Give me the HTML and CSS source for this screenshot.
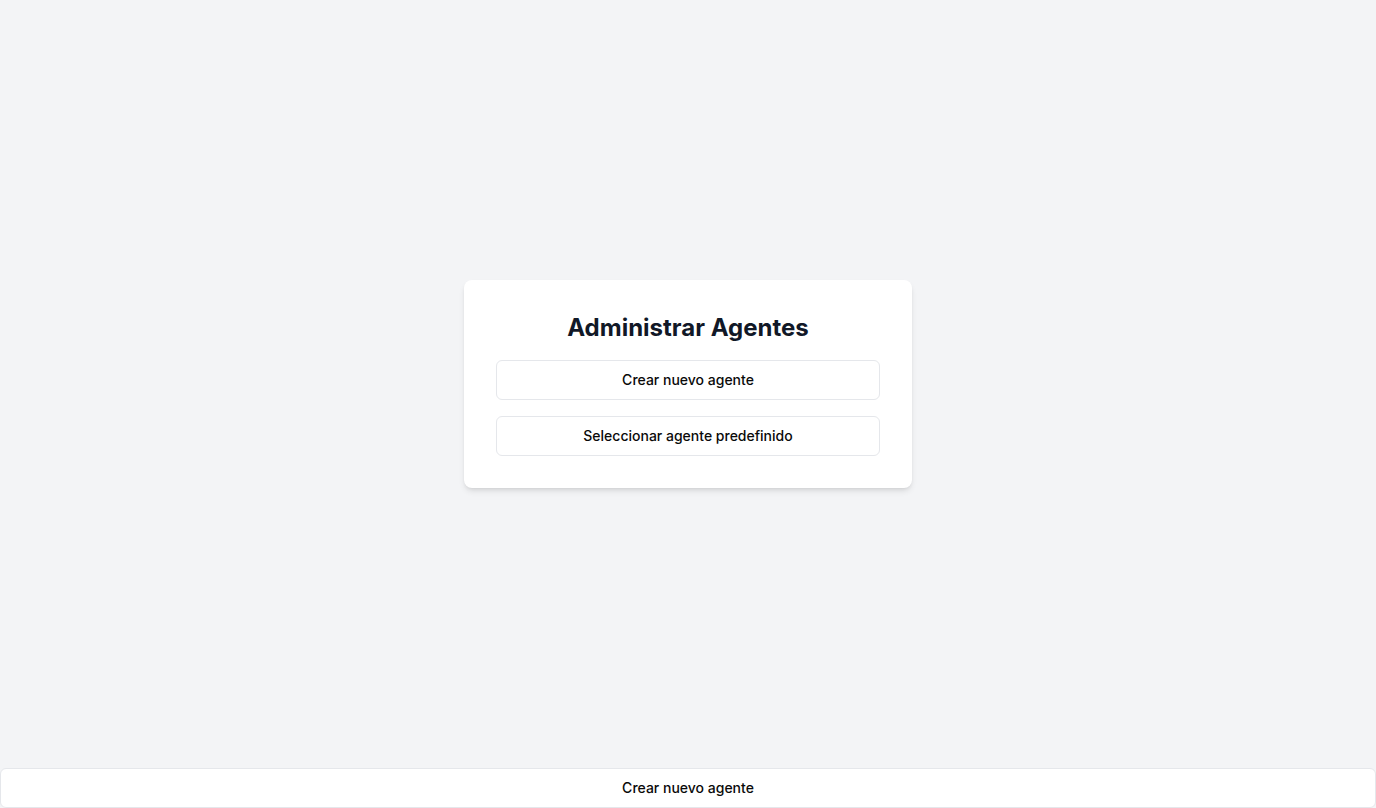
FILE: index.html
```html
<!DOCTYPE html>
<html lang="es">
<head>
<meta charset="utf-8">
<title>Administrar Agentes</title>
<link rel="stylesheet" href="styles.css">
</head>
<body>
<div class="page">
  <main class="main">
    <section class="card">
      <h1 class="title">Administrar Agentes</h1>
      <div class="actions">
        <button class="btn">Crear nuevo agente</button>
        <button class="btn">Seleccionar agente predefinido</button>
      </div>
    </section>
  </main>
  <button class="btn btn-footer">Crear nuevo agente</button>
</div>
</body>
</html>
```
FILE: styles.css
```css
* { box-sizing: border-box; }
html, body { margin: 0; padding: 0; height: 100%; }
body {
  background: #f3f4f6;
  font-family: Inter, "Noto Sans", sans-serif;
  color: #111827;
}
.page {
  min-height: 100vh;
  display: flex;
  flex-direction: column;
}
.main {
  flex: 1;
  display: flex;
  align-items: center;
  justify-content: center;
}
.card {
  width: 448px;
  background: #ffffff;
  border-radius: 8px;
  padding: 32px;
  box-shadow: 0 4px 6px -1px rgba(0,0,0,0.1), 0 2px 4px -2px rgba(0,0,0,0.1);
}
.title {
  margin: 0 0 16px;
  font-size: 24px;
  line-height: 32px;
  font-weight: 700;
  text-align: center;
  color: #111827;
}
.actions {
  display: flex;
  flex-direction: column;
  gap: 16px;
}
.btn {
  display: block;
  width: 100%;
  height: 40px;
  background: #ffffff;
  border: 1px solid #e5e7eb;
  border-radius: 6px;
  font-family: Inter, "Noto Sans", sans-serif;
  font-size: 14px;
  line-height: 20px;
  font-weight: 500;
  color: #0a0a0a;
  cursor: pointer;
  padding: 0 16px 1px;
}
.btn-footer {
  flex: none;
}
```
